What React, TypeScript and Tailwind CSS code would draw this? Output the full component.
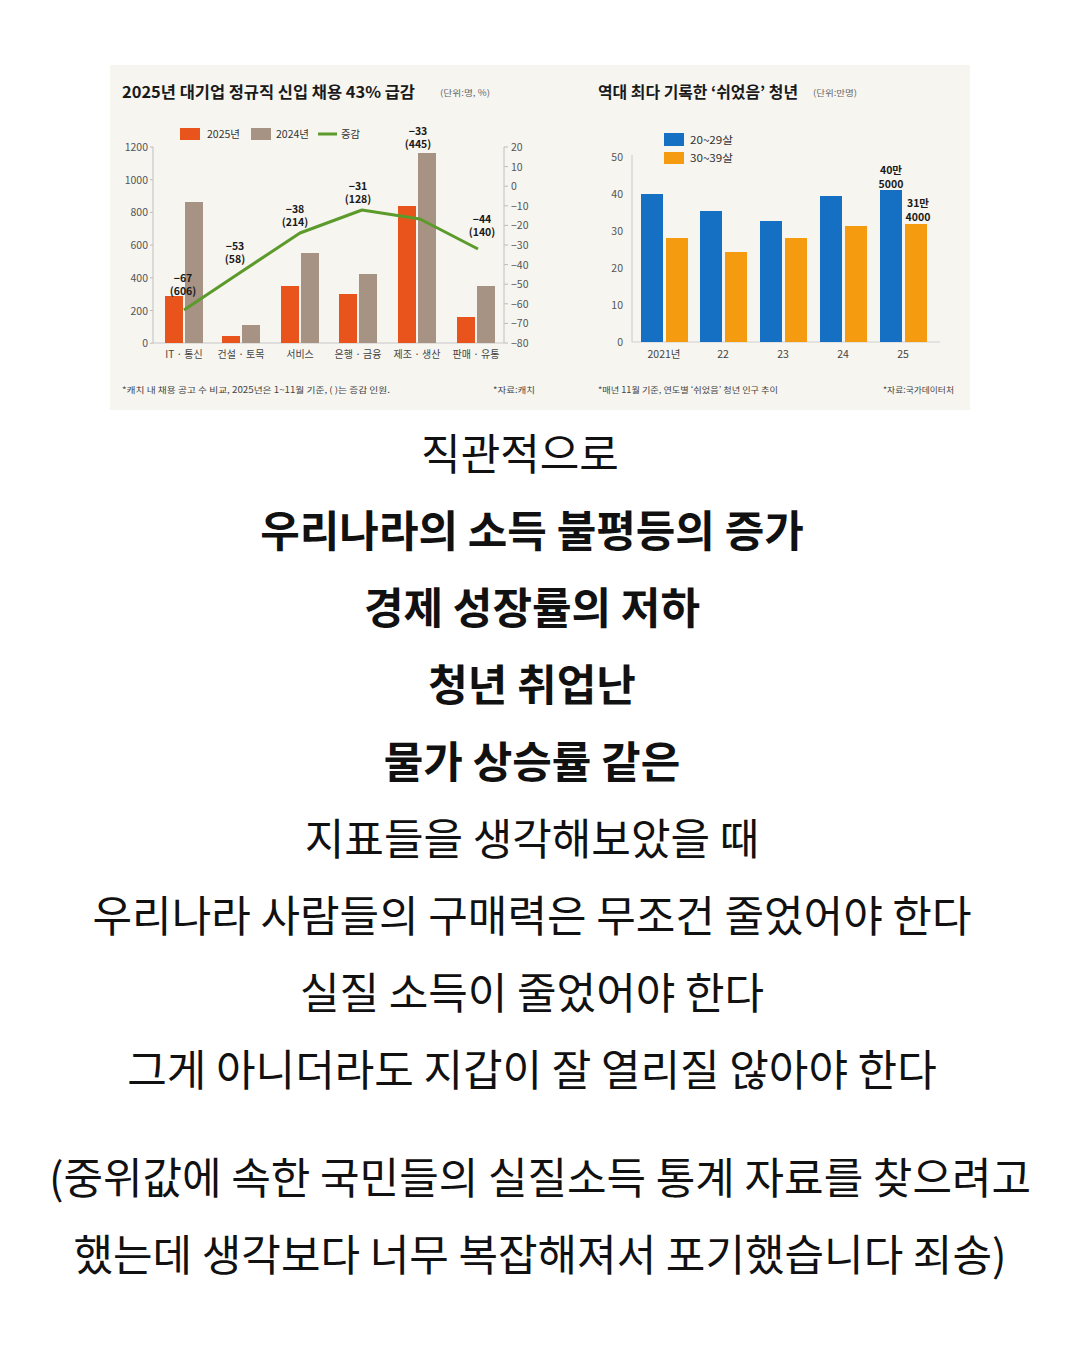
import React from 'react';

const FONT = "'Noto Sans CJK KR', 'Noto Sans', sans-serif";

// 2025 vs 2024 hiring bars, page coordinates (x of orange bar, top of orange, top of gray)
const hiring = [
  { label: 'IT · 통신', x: 165, a: 296, b: 202, cx: 184 },
  { label: '건설 · 토목', x: 222, a: 336, b: 325, cx: 241 },
  { label: '서비스', x: 281, a: 286, b: 253, cx: 300 },
  { label: '은행 · 금융', x: 339, a: 294, b: 274, cx: 358 },
  { label: '제조 · 생산', x: 398, a: 206, b: 153, cx: 417 },
  { label: '판매 · 유통', x: 457, a: 317, b: 286, cx: 476 },
];

const deltaLine = [
  [184, 310],
  [241, 272],
  [300, 233],
  [362, 210],
  [420, 219],
  [478, 249],
];

const deltaLabels = [
  { x: 183, y: 282, top: '−67', bottom: '(606)' },
  { x: 235, y: 250, top: '−53', bottom: '(58)' },
  { x: 295, y: 213, top: '−38', bottom: '(214)' },
  { x: 358, y: 190, top: '−31', bottom: '(128)' },
  { x: 418, y: 135, top: '−33', bottom: '(445)' },
  { x: 482, y: 223, top: '−44', bottom: '(140)' },
];

const leftTicks = [1200, 1000, 800, 600, 400, 200, 0];
const rightTicks = [20, 10, 0, -10, -20, -30, -40, -50, -60, -70, -80];

const youth = [
  { label: '2021년', x: 641, a: 194, b: 238 },
  { label: '22', x: 700, a: 211, b: 252 },
  { label: '23', x: 760, a: 221, b: 238 },
  { label: '24', x: 820, a: 196, b: 226 },
  { label: '25', x: 880, a: 190, b: 224 },
];

const ChartImage: React.FC = () => (
  <svg width={860} height={345} viewBox="110 65 860 345" className="block" fontFamily={FONT}>
    <rect x={110} y={65} width={860} height={345} fill="#f6f5f0" />

    {/* left chart */}
    <text x={122} y={98} fontSize={16} fontWeight={700} fill="#1a1a1a" textLength={293} lengthAdjust="spacingAndGlyphs">
      2025년 대기업 정규직 신입 채용 43% 급감
    </text>
    <text x={440} y={96} fontSize={8.5} fill="#666" textLength={50} lengthAdjust="spacingAndGlyphs">(단위:명, %)</text>

    <rect x={180} y={128} width={20} height={12} fill="#e8541c" />
    <text x={207} y={138} fontSize={10} fill="#333" textLength={33} lengthAdjust="spacingAndGlyphs">2025년</text>
    <rect x={251} y={128} width={20} height={12} fill="#a79383" />
    <text x={276} y={138} fontSize={10} fill="#333" textLength={33} lengthAdjust="spacingAndGlyphs">2024년</text>
    <line x1={318} y1={134} x2={337} y2={134} stroke="#5b9a2b" strokeWidth={3} />
    <text x={341} y={138} fontSize={10} fill="#333" textLength={19} lengthAdjust="spacingAndGlyphs">증감</text>

    {leftTicks.map((v, i) => {
      const y = 147 + i * 32.7;
      return (
        <g key={v}>
          <text x={148} y={y + 4} fontSize={10.5} fill="#555" textAnchor="end">{v}</text>
          <line x1={150} y1={y} x2={153} y2={y} stroke="#bbb" strokeWidth={1} />
        </g>
      );
    })}
    {rightTicks.map((v, i) => {
      const y = 147 + i * 19.6;
      return (
        <g key={v}>
          <line x1={504} y1={y} x2={508} y2={y} stroke="#bbb" strokeWidth={1} />
          <text x={511} y={y + 4} fontSize={10.5} fill="#555">{v < 0 ? `−${-v}` : v}</text>
        </g>
      );
    })}
    <line x1={153} y1={147} x2={153} y2={343} stroke="#c8c8c8" strokeWidth={1.2} />
    <line x1={504} y1={147} x2={504} y2={343} stroke="#c8c8c8" strokeWidth={1.2} />
    <line x1={153} y1={343} x2={504} y2={343} stroke="#c8c8c8" strokeWidth={1.2} />

    {hiring.map((h) => (
      <g key={h.label}>
        <rect x={h.x} y={h.a} width={18} height={343 - h.a} fill="#e8541c" />
        <rect x={h.x + 20} y={h.b} width={18} height={343 - h.b} fill="#a79383" />
        <text x={h.cx} y={358} fontSize={10} fill="#444" textAnchor="middle">{h.label}</text>
      </g>
    ))}

    <polyline
      points={deltaLine.map((p) => p.join(',')).join(' ')}
      fill="none"
      stroke="#5b9a2b"
      strokeWidth={3}
      strokeLinejoin="round"
    />

    {deltaLabels.map((d) => (
      <g key={d.top} fontWeight={700} fontSize={10.5} fill="#1a1a1a" textAnchor="middle">
        <text x={d.x} y={d.y}>{d.top}</text>
        <text x={d.x} y={d.y + 13}>{d.bottom}</text>
      </g>
    ))}

    <text x={122} y={393} fontSize={8.5} fill="#444" textLength={268} lengthAdjust="spacingAndGlyphs">
      *캐치 내 채용 공고 수 비교, 2025년은 1~11월 기준, (  )는 증감 인원.
    </text>
    <text x={493} y={393} fontSize={8.5} fill="#444" textLength={42} lengthAdjust="spacingAndGlyphs">*자료:캐치</text>

    {/* right chart */}
    <text x={598} y={98} fontSize={16} fontWeight={700} fill="#1a1a1a" textLength={200} lengthAdjust="spacingAndGlyphs">
      역대 최다 기록한 ‘쉬었음’ 청년
    </text>
    <text x={813} y={96} fontSize={8.5} fill="#666" textLength={44} lengthAdjust="spacingAndGlyphs">(단위:만명)</text>

    <rect x={664} y={133} width={20} height={13} fill="#1570c4" />
    <text x={690} y={144} fontSize={10} fill="#333" textLength={43} lengthAdjust="spacingAndGlyphs">20~29살</text>
    <rect x={664} y={152} width={20} height={12} fill="#f49b0f" />
    <text x={690} y={162} fontSize={10} fill="#333" textLength={43} lengthAdjust="spacingAndGlyphs">30~39살</text>

    {[50, 40, 30, 20, 10, 0].map((v, i) => {
      const y = 157 + i * 37;
      return (
        <text key={v} x={623} y={y + 4} fontSize={10.5} fill="#555" textAnchor="end">{v}</text>
      );
    })}
    <line x1={632} y1={155} x2={632} y2={342} stroke="#d0d0d0" strokeWidth={1.2} />
    <line x1={632} y1={342} x2={940} y2={342} stroke="#d0d0d0" strokeWidth={1.2} />

    {youth.map((y) => (
      <g key={y.label}>
        <rect x={y.x} y={y.a} width={22} height={342 - y.a} fill="#1570c4" />
        <rect x={y.x + 25} y={y.b} width={22} height={342 - y.b} fill="#f49b0f" />
        <text x={y.x + 23} y={358} fontSize={10.5} fill="#444" textAnchor="middle">{y.label}</text>
      </g>
    ))}

    <g fontWeight={700} fontSize={10.5} fill="#1a1a1a" textAnchor="middle">
      <text x={891} y={174}>40만</text>
      <text x={891} y={188}>5000</text>
      <text x={918} y={207}>31만</text>
      <text x={918} y={221}>4000</text>
    </g>

    <text x={598} y={393} fontSize={8.5} fill="#444" textLength={180} lengthAdjust="spacingAndGlyphs">
      *매년 11월 기준, 연도별 ‘쉬었음’ 청년 인구 추이
    </text>
    <text x={883} y={393} fontSize={8.5} fill="#444" textLength={71} lengthAdjust="spacingAndGlyphs">*자료:국가데이터처</text>
  </svg>
);

const lines: { text: string; bold?: boolean; extra?: boolean }[] = [
  { text: '직관적으로', extra: true },
  { text: '우리나라의 소득 불평등의 증가', bold: true },
  { text: '경제 성장률의 저하', bold: true },
  { text: '청년 취업난', bold: true },
  { text: '물가 상승률 같은', bold: true },
  { text: '지표들을 생각해보았을 때' },
  { text: '우리나라 사람들의 구매력은 무조건 줄었어야 한다' },
  { text: '실질 소득이 줄었어야 한다' },
  { text: '그게 아니더라도 지갑이 잘 열리질 않아야 한다' },
];

export default function App() {
  return (
    <div className="w-[1080px] min-h-[1350px] bg-white flex flex-col items-center pt-[65px] font-['Noto_Sans_CJK_KR','Noto_Sans',sans-serif] text-[#111]">
      <ChartImage />

      <div className="mt-[3px] pr-[16px] flex flex-col items-center text-[43px] leading-[77px]">
        {lines.map((l) => (
          <p
            key={l.text}
            className={`${l.bold ? 'font-bold' : 'font-normal'} ${l.extra ? 'pr-[24px]' : ''}`}
          >
            {l.text}
          </p>
        ))}
      </div>

      <div className="mt-[31px] flex flex-col items-center text-[43px] leading-[77px] font-normal">
        <p>(중위값에 속한 국민들의 실질소득 통계 자료를 찾으려고</p>
        <p>했는데 생각보다 너무 복잡해져서 포기했습니다 죄송)</p>
      </div>
    </div>
  );
}
